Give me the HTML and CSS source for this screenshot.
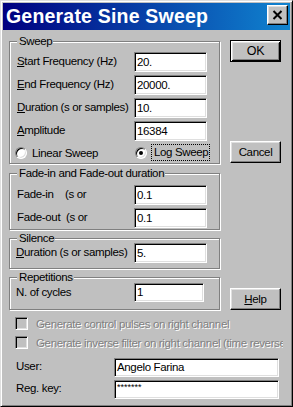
FILE: index.html
```html
<!DOCTYPE html>
<html>
<head>
<meta charset="utf-8">
<link rel="stylesheet" href="styles.css">
</head>
<body>
<div class="window">
  <div class="titlebar">
    <span class="title">Generate Sine Sweep</span>
    <div class="close">
      <svg width="11" height="10" viewBox="0 0 11 10"><path d="M1.5 1 L9.5 9 M9.5 1 L1.5 9" stroke="#000" stroke-width="2" fill="none"/></svg>
    </div>
  </div>
  <div class="body">
    <div class="top">
      <div class="groups">
        <div class="group g-sweep">
          <div class="legend">Sweep</div>
          <div class="rows">
            <div class="field"><span class="lbl"><u>S</u>tart Frequency (Hz)</span><div class="input">20.</div></div>
            <div class="field"><span class="lbl"><u>E</u>nd Frequency (Hz)</span><div class="input">20000.</div></div>
            <div class="field"><span class="lbl"><u>D</u>uration (s or samples)</span><div class="input">10.</div></div>
            <div class="field"><span class="lbl"><u>A</u>mplitude</span><div class="input">16384</div></div>
            <div class="field radios">
              <div class="radio-item linear"><span class="radio"></span><span>Linear Sweep</span></div>
              <div class="radio-item log"><span class="radio"><span class="dot"></span></span><span class="focus">Log Sweep</span></div>
            </div>
          </div>
        </div>
        <div class="group g-fade">
          <div class="legend">Fade-in and Fade-out duration</div>
          <div class="rows">
            <div class="field"><span class="lbl">Fade-in&nbsp;&nbsp;&nbsp;&nbsp;(s or</span><div class="input">0.1</div></div>
            <div class="field"><span class="lbl">Fade-out&nbsp;&nbsp;(s or</span><div class="input">0.1</div></div>
          </div>
        </div>
        <div class="group g-silence">
          <div class="legend">Silence</div>
          <div class="rows">
            <div class="field"><span class="lbl"><u>D</u>uration (s or samples)</span><div class="input">5.</div></div>
          </div>
        </div>
        <div class="group g-reps">
          <div class="legend">Repetitions</div>
          <div class="rows">
            <div class="field"><span class="lbl">N. of cycles</span><div class="input short">1</div></div>
          </div>
        </div>
      </div>
      <div class="buttons">
        <div class="btn default b-ok">OK</div>
        <div class="btn b-cancel">Cancel</div>
        <div class="btn b-help"><u>H</u>elp</div>
      </div>
    </div>
    <div class="check first"><span class="cbox"></span><span class="ctext">Generate control pulses on right channel</span></div>
    <div class="check"><span class="cbox"></span><span class="ctext">Generate inverse filter on right channel (time reversed)</span></div>
    <div class="reg first"><span class="rlbl">User:</span><div class="input wide">Angelo Farina</div></div>
    <div class="reg"><span class="rlbl">Reg. key:</span><div class="input wide pass">*******</div></div>
  </div>
</div>
</body>
</html>
```

FILE: styles.css
```css
* { box-sizing: border-box; }
html, body { margin: 0; padding: 0; background: #c0c0c0; }
body {
  font-family: "Liberation Sans", Arial, sans-serif;
  font-size: 11.5px;
  letter-spacing: -0.35px;
  color: #000;
}
.window {
  width: 293px;
  height: 407px;
  border: 1px solid;
  border-color: #dfdfdf #000 #000 #dfdfdf;
  box-shadow: inset 1px 1px #fff, inset -1px -1px #808080;
  padding: 2px;
  background: #c0c0c0;
  overflow: hidden;
}
.titlebar {
  height: 27px;
  display: flex;
  align-items: flex-start;
  padding-left: 3px;
  background: linear-gradient(to right, #000080, #1084d0);
}
.title {
  font-weight: bold;
  font-size: 19.5px;
  letter-spacing: 0.2px;
  line-height: 27px;
  color: #fff;
  white-space: nowrap;
}
.close {
  margin-left: auto;
  margin-top: 2px;
  margin-right: 2px;
  width: 21px;
  height: 20px;
  background: #c0c0c0;
  border: 1px solid;
  border-color: #fff #000 #000 #fff;
  box-shadow: inset -1px -1px #808080, inset 1px 1px #dfdfdf;
  display: flex;
  align-items: center;
  justify-content: center;
}
.close svg { display: block; }
.body {
  padding: 11px 0 0 6px;
}
.top { display: flex; }
.groups { width: 211px; display: flex; flex-direction: column; }
.group {
  border: 1px solid #808080;
  box-shadow: inset 1px 1px #fff, 1px 1px #fff;
  padding: 0 12px 0 7px;
}
.legend {
  display: table;
  margin: -8px 0 -6px 0;
  padding: 0 1px 0 2px;
  line-height: 14px;
  height: 14px;
  background: #c0c0c0;
  white-space: nowrap;
}
.rows { display: flex; flex-direction: column; gap: 3px; }
.field {
  display: grid;
  grid-template-columns: 1fr 73px;
  height: 20px;
  align-items: center;
}
.lbl { white-space: nowrap; overflow: hidden; line-height: 14px; margin-top: -2px; }
.input {
  height: 20px;
  background: #fff;
  border: 1px solid;
  border-color: #808080 #fff #fff #808080;
  box-shadow: inset 1px 1px #000, inset -1px -1px #dfdfdf;
  padding: 0 2px;
  line-height: 18px;
  white-space: nowrap;
  overflow: hidden;
}
.input.short { width: 70px; height: 19px; line-height: 17px; }
.g-sweep { padding-bottom: 3px; }
.g-sweep .rows { padding-top: 10px; }
.g-fade { margin-top: 9px; padding-bottom: 1px; }
.g-fade .rows { padding-top: 11px; }
.g-silence { margin-top: 8px; padding-bottom: 5px; padding-left: 6px; }
.g-silence .rows { padding-top: 4px; }
.g-silence .legend { margin-left: 1px; }
.g-reps { margin-top: 8px; padding-bottom: 7px; padding-left: 6px; }
.g-reps .rows { padding-top: 5px; }
.g-reps .legend { margin-left: 1px; }
.g-reps .field { height: 19px; }
.radios { height: 16px; }
.radio-item { display: flex; align-items: center; white-space: nowrap; }
.radio {
  width: 12px;
  height: 12px;
  border-radius: 50%;
  background: #fff;
  border: 1px solid;
  border-color: #808080 #fff #fff #808080;
  box-shadow: inset 1px 1px #000, inset -1px -1px #dfdfdf;
  display: flex;
  align-items: center;
  justify-content: center;
  flex: none;
}
.dot { width: 4px; height: 4px; border-radius: 50%; background: #000; }
.linear .radio { margin-left: -2px; margin-right: 5px; }
.log .radio { margin-left: 1px; margin-right: 4px; }
.focus {
  border: 1px dotted #000;
  padding: 0 1px 0 2px;
  line-height: 15px;
}
.buttons {
  margin-left: 10px;
  width: 51px;
  display: flex;
  flex-direction: column;
}
.btn {
  height: 22px;
  width: 51px;
  background: #c0c0c0;
  border: 1px solid;
  border-color: #fff #000 #000 #fff;
  box-shadow: inset -1px -1px #808080, inset 1px 1px #dfdfdf;
  display: flex;
  align-items: center;
  justify-content: center;
  line-height: 14px;
}
.btn.default {
  border-color: #000;
  box-shadow: inset 1px 1px #fff, inset -1px -1px #000, inset 2px 2px #dfdfdf, inset -2px -2px #808080;
}
.b-ok { margin-top: -1px; font-size: 12.5px; }
.b-cancel { margin-top: 79px; }
.b-help { margin-top: 125px; }
.check {
  height: 19px;
  width: 274px;
  display: flex;
  align-items: center;
  white-space: nowrap;
  overflow: hidden;
}
.check.first { margin-top: 4px; }
.cbox {
  flex: none;
  width: 13px;
  height: 13px;
  margin-left: 6px;
  margin-right: 8px;
  background: #c0c0c0;
  border: 1px solid;
  border-color: #808080 #fff #fff #808080;
  box-shadow: inset 1px 1px #000, inset -1px -1px #dfdfdf;
}
.ctext { color: #808080; text-shadow: 1px 1px #fff; }
.reg {
  display: grid;
  grid-template-columns: 105px 165px;
  height: 19px;
  align-items: center;
  margin-top: 3px;
}
.reg.first { margin-top: 6px; }
.rlbl { padding-left: 7px; margin-top: -3px; }
.input.wide { height: 19px; line-height: 17px; }
.input.pass { font-size: 9px; letter-spacing: 0; line-height: 12px; }
```
